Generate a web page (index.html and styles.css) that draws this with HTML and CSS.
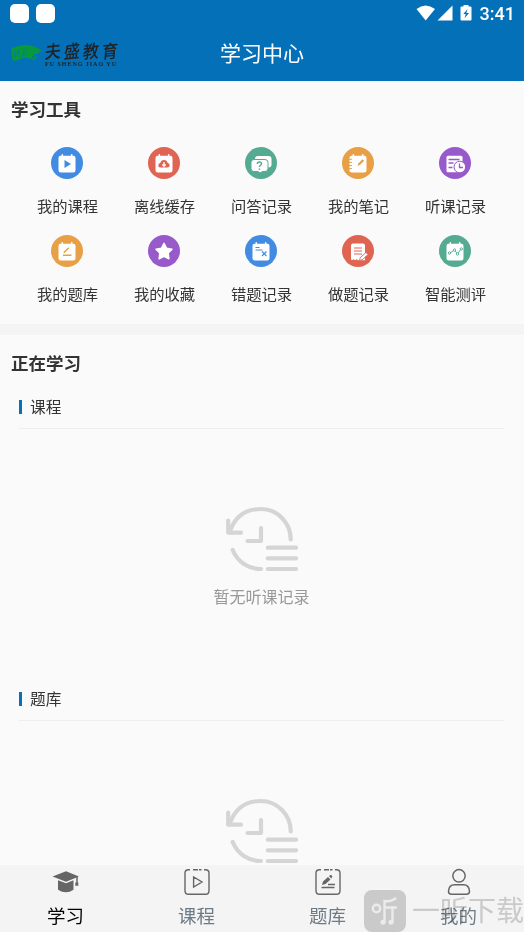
FILE: index.html
```html
<!DOCTYPE html>
<html lang="zh-CN">
<head>
<meta charset="utf-8">
<title>学习中心</title>
<link rel="stylesheet" href="styles.css">
</head>
<body>
<svg class="defs" aria-hidden="true">
  <symbol id="history" viewBox="0 0 72 66">
    <g fill="none" stroke="#d5d5d5" stroke-width="4.200" stroke-linecap="round" stroke-linejoin="round">
      <path d="M64.700 33.500A30 30.300 0 0 0 34.700 3Q12 3 4 25M6.700 44A30 30.300 0 0 0 35 63"/>
      <path d="M2.200 14.500V26.700H15M35 22V35H21.500M41.800 41.700H70M41.800 52.300H70M41.800 63H70"/>
    </g>
  </symbol>
  <symbol id="card" viewBox="0 0 32 32">
    <path d="M9.500 8.700h1V7.400q.8-1 1.600 0v1.300h7.800V7.400q.8-1 1.600 0v1.300h1Q24.500 8.700 24.500 11v12q0 2.500-2.500 2.500H10Q7.500 25.500 7.500 23V11q0-2.300 2-2.300z" fill="#fff"/>
  </symbol>
</svg>
<div class="screen">
  <header class="header">
    <div class="status">
      <div class="notices"><i></i><i></i></div>
      <div class="signals">
        <svg width="60" height="18" viewBox="0 0 60 18" fill="#fff"><path d="M1.500 4Q10.500-3 20 4L10.700 15.500z"/><path d="M22.500 15.500H37.500V.5z"/><path d="M46.500 1.500h2V0h5v1.500h2q1 0 1 1v12q0 1-1 1h-9q-1 0-1-1v-12q0-1 1-1z"/><path d="M52.600 4 48.300 9h2.500l-1.300 4.300L54 8h-2.700z" fill="#0470b8"/></svg>
        <span>3:41</span>
      </div>
    </div>
    <div class="titlebar">
      <div class="logo">
        <svg width="34" height="20" viewBox="0 0 34 20"><path d="M1 5 3 4Q18-3 32 7q-3 0-4 3-3-1-5 1l-3 4q-5-3-11 1l-6 1q-2-6-2-12z" fill="#079a3c"/><path d="m5 6-1 8 5-8-1 7M15 4l-3 9 6-7" fill="none" stroke="#0470b8" stroke-width=".6"/><path d="M20 14q3-4 6-1-2 4-5 1" fill="none" stroke="#079a3c" stroke-width="1.200"/></svg>
        <div class="brand"><b><i>夫</i><i>盛</i><i>教</i><i>育</i></b><small>FU SHENG JIAO YU</small></div>
      </div>
      <h1>学习中心</h1>
    </div>
  </header>

  <section class="tools">
    <h2>学习工具</h2>
    <div class="grid">
      <div class="tool"><svg class="blue"><use href="#card"/><path class="blue-fill" d="m13.500 13 6.500 4-6.500 4z"/></svg><span>我的课程</span></div>
      <div class="tool"><svg class="red"><use href="#card"/><path class="red-fill" d="M13 20.500q-2.700 0-2.700-2.100 0-1.900 2-2.300.7-3 3.700-3 3 0 3.700 3 2 .4 2 2.300 0 2.100-2.700 2.100z"/><path d="M16 15v4M14.300 17.500 16 19.300l1.700-1.800" fill="none" stroke="#fff" stroke-width="1.300"/></svg><span>离线缓存</span></div>
      <div class="tool"><svg class="green"><rect x="10" y="9" width="16.500" height="11.500" rx="3" fill="#fff"/><path d="M9 12.500h11q3 0 3 3v6q0 3-3 3h-2.500L15 26l-2-1.500H9q-3 0-3-3v-6q0-3 3-3z" fill="#fff" stroke="#55aa92" stroke-width="1"/><path d="M12.300 17q0-2 2.100-2 2.100 0 2.100 1.800 0 1-1.100 1.500-1 .5-1 1.700M14.400 21.500v1.500" fill="none" stroke="#55aa92" stroke-width="1.400"/></svg><span>问答记录</span></div>
      <div class="tool"><svg class="orange"><use href="#card"/><path d="M7 12.300h3M7 15.400h3M7 18.500h3M7 21.600h3" stroke="#e8a046" stroke-width="1"/><path d="m15.500 19 1-2.800 4-4 1.600 1.600-4 4z" class="orange-fill"/></svg><span>我的笔记</span></div>
      <div class="tool"><svg class="purple"><path d="M9 8.700h13q1.500 0 1.500 1.500v14q0 1-1 1H9q-1.500 0-1.500-1.500V10.200q0-1.500 1.500-1.500z" fill="#fff"/><path d="M9.500 12.500h11M9.500 16h5M9.500 20.500h4" stroke="#985acb" stroke-width="1.300"/><circle cx="20.800" cy="20" r="5.800" fill="#fff" stroke="#985acb"/><path d="M20.500 16.500V20.500H24" fill="none" stroke="#985acb" stroke-width="1.300"/></svg><span>听课记录</span></div>
      <div class="tool"><svg class="orange"><use href="#card"/><path d="M12 20.300h8.500M12.800 17.800l5-5" fill="none" stroke="#e8a046" stroke-width="1.500"/></svg><span>我的题库</span></div>
      <div class="tool"><svg class="purple"><path d="m16 8.300 2.600 5 5.400.9-3.800 3.900.7 5.700-4.900-2.400-4.900 2.400.7-5.700L8 14.200l5.400-.9z" fill="#fff" stroke="#fff" stroke-width="1.500" stroke-linejoin="round"/></svg><span>我的收藏</span></div>
      <div class="tool"><svg class="blue"><use href="#card"/><path d="M10.500 12.500h4M10.500 15h7M17 16.500l4.500 4.500M21.500 16.500 17 21" fill="none" stroke="#418be3" stroke-width="1.200"/></svg><span>错题记录</span></div>
      <div class="tool"><svg class="red"><path d="M9 10.500q0-2 2-2h10q2 0 2 2v14.700h-7l-1.500-1-1.500 1-1.500-1-1.500 1-1-1z" fill="#fff"/><path d="M12 13h8M12 16h8M12 19h8" stroke="#e06452" stroke-width="1.200"/><path d="m17.500 25.500.8-3 5.700-5 2 2-5.700 5.200z" fill="#fff" stroke="#e06452" stroke-width=".9"/></svg><span>做题记录</span></div>
      <div class="tool"><svg class="green"><use href="#card"/><g fill="#fff" stroke="#55aa92" stroke-width=".9"><path d="m11 18 4.500-3 3 4 3.500-5" fill="none"/><circle cx="10.500" cy="18" r="1.200"/><circle cx="15.500" cy="15" r="1.200"/><circle cx="18.500" cy="19" r="1.200"/><circle cx="22.300" cy="14" r="1.200"/></g></svg><span>智能测评</span></div>
    </div>
  </section>

  <section class="learning">
    <h2>正在学习</h2>
    <div class="block">
      <h3>课程</h3>
      <div class="empty"><svg><use href="#history"/></svg><p>暂无听课记录</p></div>
    </div>
    <div class="block">
      <h3>题库</h3>
      <div class="empty"><svg><use href="#history"/></svg></div>
    </div>
  </section>

  <nav class="nav">
    <a class="active"><svg viewBox="0 0 28 28"><path d="M.5 8.500 14 3.300 27 8.500 14 13.800zM6 12.300v9.500q8 5 15.500 0v-9.500L14 15.300z" fill="#666"/><path d="M25 9v6" stroke="#666" stroke-width="1.500"/><path d="M23.300 14.500h3v3.300h-3z" fill="#666"/></svg><span>学习</span></a>
    <a><svg viewBox="0 0 28 28"><path d="M7 1.800H5.500q-3.500 0-3.500 3.500v17.400q0 3.500 3.500 3.500h17q3.500 0 3.500-3.500V5.300q0-3.500-3.500-3.500H21M10 1.800h5M16 1.800h2.500M10.600 9v10l8.400-5z" fill="none" stroke="#666" stroke-width="1.400"/></svg><span>课程</span></a>
    <a><svg viewBox="0 0 28 28"><path d="M7 1.800H5.500q-3.500 0-3.500 3.500v17.400q0 3.500 3.500 3.500h17q3.500 0 3.500-3.500V5.300q0-3.500-3.500-3.500H21M10 1.800h5M16 1.800h2.500M14 16.500h7M7.500 19.500h13" fill="none" stroke="#666" stroke-width="1.400"/><path d="m8 17 1-3.500 5-4.500 2.500 2.500-5 4.500zM15 8l2-1.300 1.500 1.800-1.300 2z" fill="#666"/></svg><span>题库</span></a>
    <a><svg viewBox="0 0 28 28"><g fill="none" stroke="#666" stroke-width="1.500"><circle cx="14" cy="7.800" r="6.200"/><path d="M6.500 26.200q-3 0-3-3 .5-6.500 6-6.500h9q5.500 0 6 6.500 0 3-3 3z"/></g></svg><span>我的</span></a>
  </nav>
  <div class="watermark">
    <svg width="42" height="42" viewBox="0 0 42 42"><rect width="42" height="42" rx="8" fill="#ccc"/><g fill="none" stroke="#f5f5f5" stroke-width="2.400" stroke-linecap="round"><circle cx="12.500" cy="18.500" r="3.700"/><path d="M20.500 32V11q6 1 11-2.500M21 17.500h11M28.500 17.500V32"/></g><g fill="#f5f5f5"><circle cx="19" cy="32.300" r="2.500"/><circle cx="27" cy="32.300" r="2.500"/></g></svg>
    <span>一听下载</span>
  </div>
</div>
</body>
</html>
```

FILE: styles.css
```css
* { box-sizing: border-box; }
body {
  margin: 0;
  font-family: Roboto, "Noto Sans CJK SC", sans-serif;
  color: #333;
  background: #fafafa;
}
h1, h2, h3, p { margin: 0; }
.defs { position: absolute; width: 0; height: 0; }
.screen {
  position: relative;
  display: flex;
  flex-direction: column;
  width: 524px;
  height: 932px;
  overflow: hidden;
}
.header { flex: none; height: 81px; background: #0470b8; color: #fff; }
.status {
  display: flex;
  justify-content: space-between;
  height: 27px;
  padding: 0 9px 0 10px;
}
.notices { display: flex; gap: 7px; padding-top: 4px; }
.notices i { width: 19px; height: 19px; border-radius: 5px; background: #fff; }
.signals { display: flex; align-items: center; gap: 5px; font-size: 18px; font-weight: 500; line-height: 27px; }
.signals svg { margin-top: 1px; }
.titlebar { display: grid; grid-template-columns: 1fr auto 1fr; height: 54px; align-items: center; }
.titlebar h1 { font-size: 21px; line-height: 54px; font-weight: 400; }
.logo { display: flex; align-items: center; padding-left: 10px; color: #222; }
.logo > svg { flex: none; }
.brand { width: 73px; margin-left: 1px; }
.brand b { display: flex; justify-content: space-between; font: 500 16px/20px "Noto Sans CJK SC", sans-serif; }
.brand i { width: 16px; font-style: normal; transform: skew(-4deg, -6deg) scaleY(1.12); }
.brand small { display: block; font: 700 6px/8px "Liberation Serif", serif; letter-spacing: .98px; white-space: nowrap; }

.tools { flex: none; height: 254px; border-bottom: 11px solid #f4f4f4; }
h2 { padding-left: 11px; font-size: 17.5px; line-height: 58px; font-weight: 700; }
.tools h2 { height: 58px; }
.grid { display: grid; grid-template-columns: repeat(5, 1fr); grid-auto-rows: 88px; padding: 8px 20px 0 19px; }
.tool { display: flex; flex-direction: column; align-items: center; }
.tool svg { width: 32px; height: 32px; margin-left: -.5px; border-radius: 50%; }
.tool span { margin-top: 17px; font-size: 15.3px; line-height: 22px; }
.blue { background: #418be3; }
.red { background: #e06452; }
.green { background: #55aa92; }
.orange { background: #e8a046; }
.purple { background: #985acb; }
.blue-fill { fill: #418be3; }
.red-fill { fill: #e06452; }
.orange-fill { fill: #e8a046; }

.learning { flex: 1; min-height: 0; overflow: hidden; }
.learning h2 { line-height: 50px; padding-top: 4px; height: 50px; }
.block { height: 292px; padding: 0 20px 0 19px; }
.block h3 {
  display: flex;
  align-items: center;
  height: 44px;
  border-bottom: 1px solid #eee;
  font-size: 15.7px;
  font-weight: 400;
}
.block h3::before { content: ""; width: 3px; height: 14px; margin-right: 8px; background: #0671b8; }
.empty { display: flex; flex-direction: column; align-items: center; padding-top: 77px; }
.empty svg { width: 72px; height: 66px; }
.empty p { margin-top: 14px; font-size: 16px; line-height: 24px; color: #999; }

.nav { flex: none; display: grid; grid-template-columns: repeat(4, 1fr); height: 67px; background: #f4f4f4; color: #6d7b87; }
.nav a { display: flex; flex-direction: column; align-items: center; padding-top: 3px; }
.nav svg { width: 28px; height: 28px; }
.nav span { margin-top: 7px; font-size: 18.5px; line-height: 28px; }
.nav .active { color: #000; }
.watermark { position: absolute; left: 364px; top: 890px; display: flex; align-items: center; gap: 6px; opacity: .85; mix-blend-mode: multiply; }
.watermark span { height: 42px; font-size: 28px; line-height: 44px; color: #ccc; white-space: nowrap; }
```
